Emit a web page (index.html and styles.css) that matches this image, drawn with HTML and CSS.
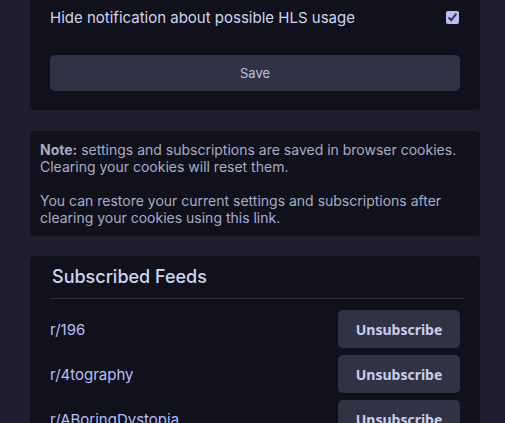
FILE: index.html
```html
<!DOCTYPE html>
<html>
<head>
<meta charset="utf-8">
<link rel="stylesheet" href="styles.css">
</head>
<body>
<div class="page">
  <div class="card settings">
    <div class="row">
      <label for="hls">Hide notification about possible HLS usage</label>
      <input type="checkbox" id="hls" class="check" checked>
    </div>
    <button class="save">Save</button>
  </div>

  <div class="card note">
    <p><b>Note:</b> settings and subscriptions are saved in browser cookies. Clearing your cookies will reset them.<br><br>You can restore your current settings and subscriptions after clearing your cookies using <a href="#" class="link">this link</a>.</p>
  </div>

  <div class="card feeds">
    <h2 class="title">Subscribed Feeds</h2>
    <hr class="rule">
    <div class="feed"><a href="#" class="feed-name">r/196</a><button class="unsub">Unsubscribe</button></div>
    <div class="feed"><a href="#" class="feed-name">r/4tography</a><button class="unsub">Unsubscribe</button></div>
    <div class="feed"><a href="#" class="feed-name">r/ABoringDystopia</a><button class="unsub">Unsubscribe</button></div>
  </div>
</div>
</body>
</html>
```

FILE: styles.css
```css
html, body {
  margin: 0;
  padding: 0;
  background: #1e1e2e;
  overflow: hidden;
}
body {
  font-family: Inter, "Liberation Sans", sans-serif;
  color: #cdd6f4;
}
.page {
  width: 450px;
  margin-left: 30px;
  display: flex;
  flex-direction: column;
  gap: 20px;
}
.card {
  background: #11111b;
  border-radius: 4px;
}
.settings {
  padding: 0 20px 19px;
  border-radius: 0 0 4px 4px;
}
.row {
  height: 34px;
  display: flex;
  align-items: center;
  justify-content: space-between;
  margin-bottom: 21px;
  font-size: 15px;
}
.check {
  accent-color: #b4befe;
  width: 13px;
  height: 13px;
  margin: 0 1px 0 0;
}
.save {
  display: block;
  width: 100%;
  height: 36px;
  border: none;
  border-radius: 5px;
  background: #313244;
  color: #bac2de;
  font-family: Inter, "Liberation Sans", sans-serif;
  font-size: 13px;
  padding: 0;
}
.note {
  padding: 10px;
  margin-top: 1px;
}
.note p {
  margin: 0;
  font-size: 14px;
  line-height: 17px;
  color: #a6adc8;
}
.note b {
  color: #a6adc8;
}
.link {
  color: #a4acee;
  text-decoration: none;
}
.feeds {
  padding: 0 16px 20px 20px;
}
.title {
  margin: 0;
  padding: 10px 0 0 2px;
  height: 32px;
  line-height: 22px;
  font-size: 18px;
  font-weight: 500;
  color: #cdd6f4;
}
.rule {
  border: none;
  border-top: 1px solid #313244;
  margin: 0 0 11px 0;
}
.feed {
  display: flex;
  align-items: center;
  justify-content: space-between;
  height: 38px;
  margin-bottom: 7px;
  padding-right: 4px;
}
.feed-name {
  color: #b4befe;
  text-decoration: none;
  font-size: 15px;
}
.unsub {
  width: 122px;
  height: 38px;
  border: none;
  border-radius: 5px;
  background: #313244;
  color: #c8cdef;
  font-family: "Noto Sans", "Open Sans", sans-serif;
  font-weight: 700;
  font-size: 14px;
  padding: 0;
}
```
